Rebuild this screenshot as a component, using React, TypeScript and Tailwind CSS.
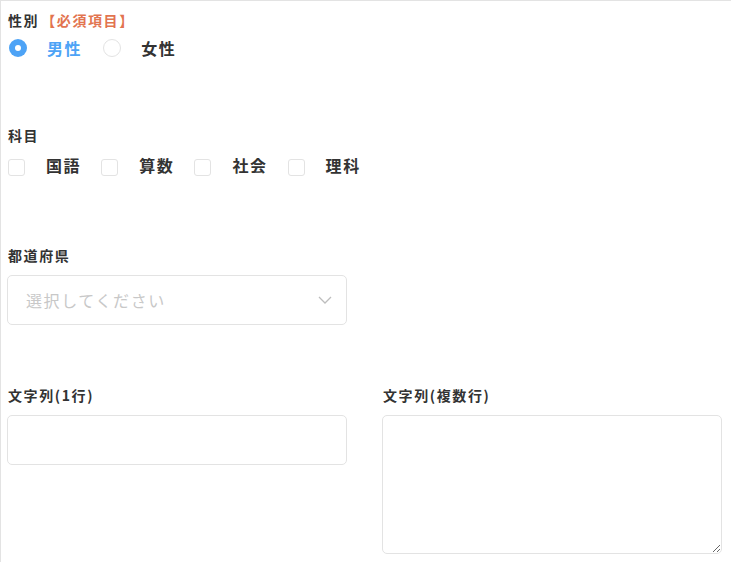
import React, { useState } from 'react';

const font = { fontFamily: '"Noto Sans CJK JP", "Noto Sans", sans-serif' };

const subjects = ['国語', '算数', '社会', '理科'];

export default function App() {
    const [gender, setGender] = useState('male');
    const [checked, setChecked] = useState<string[]>([]);

    const toggle = (s: string) =>
        setChecked((prev) => (prev.includes(s) ? prev.filter((x) => x !== s) : [...prev, s]));

    return (
        <div
            className="w-[731px] h-[562px] bg-white border-t border-l border-[#e3e3e3] overflow-hidden text-[#333] tracking-[0.1em]"
            style={font}
        >
            <div className="pl-[6px] pr-[9px] pt-[8px]">
                {/* gender */}
                <div className="h-[22px] flex items-center pl-px text-[14px] font-bold leading-none">
                    性別<span className="text-[#e2744f] ml-[2px]">【必須項目】</span>
                </div>
                <div className="flex items-center h-[32px] mt-[1px]">
                    {[
                        { v: 'male', l: '男性' },
                        { v: 'female', l: '女性' },
                    ].map((o) => (
                        <button
                            key={o.v}
                            onClick={() => setGender(o.v)}
                            className="flex items-center mr-[20px]"
                        >
                            {gender === o.v ? (
                                <span className="ml-[2px] w-[18px] h-[18px] rounded-full bg-[#4da3f6] flex items-center justify-center">
                                    <span className="w-[6px] h-[6px] rounded-full bg-white" />
                                </span>
                            ) : (
                                <span className="ml-[1px] w-[18px] h-[18px] rounded-full border border-[#e3e3e3] bg-white" />
                            )}
                            <span
                                className={`ml-[20px] text-[16px] font-bold leading-none ${
                                    gender === o.v ? 'text-[#4da3f6]' : 'text-[#333]'
                                }`}
                            >
                                {o.l}
                            </span>
                        </button>
                    ))}
                </div>

                {/* subjects */}
                <div className="mt-[60px] h-[22px] flex items-center pl-px text-[14px] font-bold leading-none">
                    科目
                </div>
                <div className="flex items-center h-[30px] mt-[4px]">
                    {subjects.map((s) => (
                        <button key={s} onClick={() => toggle(s)} className="flex items-center mr-[19px]">
                            <span
                                className={`ml-[1px] w-[17px] h-[17px] rounded-[3px] border mt-[4px] ${
                                    checked.includes(s) ? 'bg-[#4da3f6] border-[#4da3f6]' : 'border-[#e3e3e3] bg-white'
                                }`}
                            />
                            <span className="ml-[21px] text-[16px] font-bold leading-none">{s}</span>
                        </button>
                    ))}
                </div>

                {/* prefecture */}
                <div className="mt-[64px] h-[22px] flex items-center pl-px text-[14px] font-bold leading-none">
                    都道府県
                </div>
                <div className="mt-[9px] w-[340px] h-[50px] rounded-[5px] border border-[#e3e3e3] flex items-center justify-between pl-[18px] pr-[14px]">
                    <span className="text-[16px] text-[#c8c8c8]">選択してください</span>
                    <svg width="14" height="8" viewBox="0 0 14 8" fill="none">
                        <path d="M1 1l6 6 6-6" stroke="#bdbdbd" strokeWidth="1.3" />
                    </svg>
                </div>

                {/* text fields */}
                <div className="mt-[59px] grid grid-cols-[340px_340px] gap-x-[35px]">
                    <div>
                        <div className="h-[22px] flex items-center pl-px text-[14px] font-bold leading-none">
                            文字列(1行)
                        </div>
                        <input className="mt-[9px] w-[340px] h-[50px] rounded-[5px] border border-[#e3e3e3] px-3 outline-none" />
                    </div>
                    <div>
                        <div className="h-[22px] flex items-center pl-px text-[14px] font-bold leading-none">
                            文字列(複数行)
                        </div>
                        <textarea className="mt-[9px] block w-[340px] h-[139px] rounded-[5px] border border-[#e3e3e3] px-3 py-2 outline-none" />
                    </div>
                </div>
            </div>
        </div>
    );
}
